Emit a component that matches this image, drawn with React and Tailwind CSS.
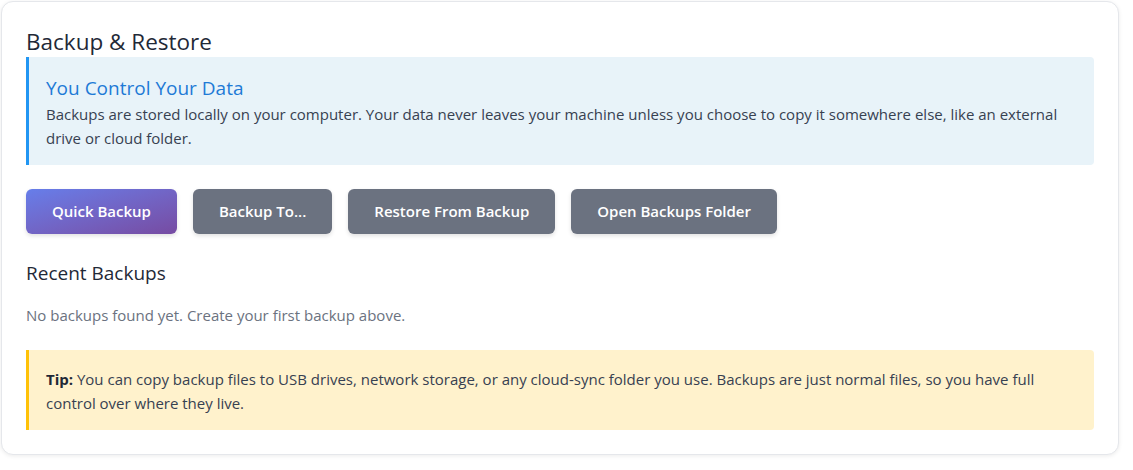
import React from "react";

const buttons = ["Backup To...", "Restore From Backup", "Open Backups Folder"];

export default function App() {
  return (
    <div className="bg-white min-h-screen p-[1px] font-['Open_Sans',sans-serif]">
      <div className="w-[1118px] bg-white border border-gray-200 rounded-xl shadow-[0_1px_4px_rgba(0,0,0,0.08)] px-6 pt-[26px] pb-6">
        <h2 className="text-[22.5px] leading-7 text-[#1f2937] mb-[1px]">Backup &amp; Restore</h2>

        {/* info */}
        <div className="bg-[#e8f3f9] border-l-[3px] border-l-[#2196f3] rounded-r px-[17px] pt-[19px] pb-[15px]">
          <div className="text-[19px] leading-6 text-[#1e7ad6] mb-[2px]">You Control Your Data</div>
          <p className="text-[15px] leading-6 text-[#374151]">
            Backups are stored locally on your computer. Your data never leaves your machine unless you choose to copy it
            somewhere else, like an external drive or cloud folder.
          </p>
        </div>

        <div className="flex gap-4 mt-6">
          <button className="h-[45px] px-[26px] rounded-md text-white text-[15px] font-semibold bg-gradient-to-br from-[#667eea] to-[#764ba2] shadow-[0_2px_4px_rgba(0,0,0,0.12)]">
            Quick Backup
          </button>
          {buttons.map((b) => (
            <button
              key={b}
              className="h-[45px] px-[26px] rounded-md text-white text-[15px] font-semibold bg-[#6b7280] shadow-[0_2px_4px_rgba(0,0,0,0.12)]"
            >
              {b}
            </button>
          ))}
        </div>

        <h3 className="text-[19px] leading-6 text-[#1f2937] mt-[27px]">Recent Backups</h3>
        <p className="text-[15px] leading-6 text-[#6b7280] mt-[18px]">No backups found yet. Create your first backup above.</p>

        {/* tip */}
        <div className="mt-[23px] bg-[#fff2cc] border-l-[3px] border-l-[#ffc107] rounded-r px-[17px] pt-[17px] pb-[15px]">
          <p className="text-[15px] leading-6 text-[#374151]">
            <b className="font-bold text-[#1f2937]">Tip:</b>{" "}
            You can copy backup files to USB drives, network storage, or any cloud-sync folder you use. Backups are just
            normal files, so you have full control over where they live.
          </p>
        </div>
      </div>
    </div>
  );
}
